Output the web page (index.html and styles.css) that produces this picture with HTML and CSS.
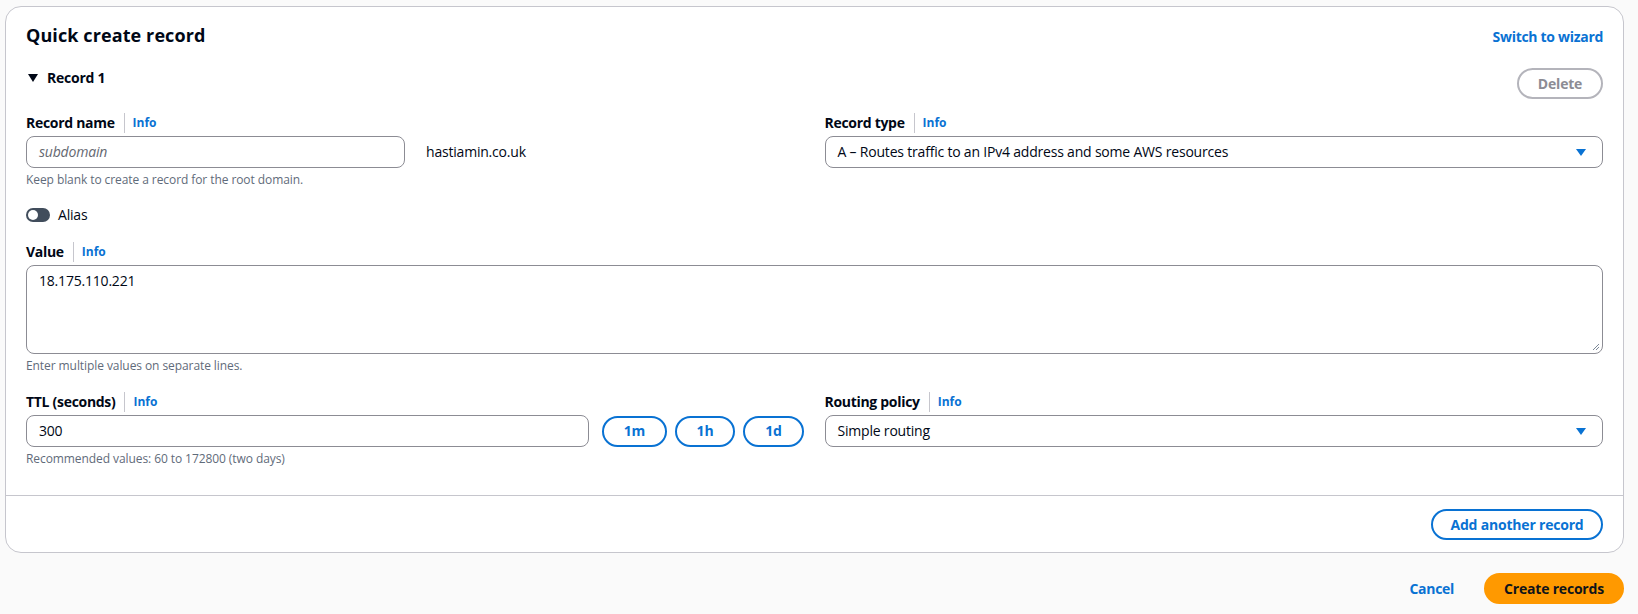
FILE: index.html
```html
<!DOCTYPE html>
<html lang="en">
<head>
<meta charset="utf-8">
<title>Quick create record</title>
<link rel="stylesheet" href="styles.css">
</head>
<body>
<div class="page">
  <section class="card">
    <div class="card-body">
      <header class="card-header">
        <h2 class="title">Quick create record</h2>
        <a class="link-strong" href="#">Switch to wizard</a>
      </header>

      <div class="record-head">
        <div class="expander">
          <svg class="tri" width="10" height="8" viewBox="0 0 10 8"><path d="M0 0 H10 L5 8 Z" fill="#000716"/></svg>
          <span>Record 1</span>
        </div>
        <button class="btn btn-disabled" type="button">Delete</button>
      </div>

      <div class="grid">
        <div class="field">
          <div class="label"><span>Record name</span><span class="sep"></span><a class="info" href="#">Info</a></div>
          <div class="name-row">
            <div class="input name-input"><span class="placeholder">subdomain</span></div>
            <span class="domain">hastiamin.co.uk</span>
          </div>
          <div class="hint">Keep blank to create a record for the root domain.</div>
        </div>
        <div class="field">
          <div class="label"><span>Record type</span><span class="sep"></span><a class="info" href="#">Info</a></div>
          <div class="input select">
            <span>A – Routes traffic to an IPv4 address and some AWS resources</span>
            <svg class="caret" width="10" height="7" viewBox="0 0 10 7"><path d="M0 0 H10 L5 7 Z" fill="#0972d3"/></svg>
          </div>
        </div>
      </div>

      <div class="toggle-row">
        <span class="toggle"><span class="knob"></span></span>
        <span>Alias</span>
      </div>

      <div class="field value-field">
        <div class="label"><span>Value</span><span class="sep"></span><a class="info" href="#">Info</a></div>
        <div class="textarea">
          <span>18.175.110.221</span>
          <svg class="grip" width="8" height="8" viewBox="0 0 8 8"><path d="M7 1 L1 7 M7 4 L4 7" stroke="#7d8998" stroke-width="1"/></svg>
        </div>
        <div class="hint">Enter multiple values on separate lines.</div>
      </div>

      <div class="grid ttl-grid">
        <div class="field">
          <div class="label"><span>TTL (seconds)</span><span class="sep"></span><a class="info" href="#">Info</a></div>
          <div class="ttl-row">
            <div class="input ttl-input"><span>300</span></div>
            <button class="btn btn-normal ttl-btn" type="button">1m</button>
            <button class="btn btn-normal ttl-btn" type="button">1h</button>
            <button class="btn btn-normal ttl-btn" type="button">1d</button>
          </div>
          <div class="hint">Recommended values: 60 to 172800 (two days)</div>
        </div>
        <div class="field">
          <div class="label"><span>Routing policy</span><span class="sep"></span><a class="info" href="#">Info</a></div>
          <div class="input select">
            <span>Simple routing</span>
            <svg class="caret" width="10" height="7" viewBox="0 0 10 7"><path d="M0 0 H10 L5 7 Z" fill="#0972d3"/></svg>
          </div>
        </div>
      </div>
    </div>
    <footer class="card-footer">
      <button class="btn btn-normal" type="button">Add another record</button>
    </footer>
  </section>

  <div class="actions">
    <a class="link-strong cancel" href="#">Cancel</a>
    <button class="btn btn-primary" type="button">Create records</button>
  </div>
</div>
</body>
</html>
```

FILE: styles.css
```css
* { box-sizing: border-box; }
html, body {
  margin: 0;
  padding: 0;
  background: #fafafa;
}
body {
  font-family: "Open Sans", "Noto Sans", Arial, sans-serif;
  font-size: 14px;
  line-height: 20px;
  color: #000716;
  letter-spacing: -0.2px;
}
.page {
  padding: 6px 14px 0 5px;
}
.card {
  background: #ffffff;
  border: 1px solid #c6c6cd;
  border-radius: 16px;
}
.card-body {
  padding: 16px 20px 28px 20px;
}
.card-header {
  display: flex;
  justify-content: space-between;
  align-items: baseline;
}
.title {
  margin: 0;
  font-size: 18px;
  line-height: 24px;
  font-weight: 700;
  letter-spacing: 0.1px;
}
.link-strong {
  color: #0972d3;
  font-weight: 700;
  text-decoration: none;
  font-size: 14px;
  letter-spacing: -0.3px;
}
.record-head {
  display: flex;
  justify-content: space-between;
  align-items: flex-start;
  margin-top: 21px;
}
.expander {
  display: flex;
  align-items: center;
  gap: 9px;
  font-weight: 700;
  padding-left: 2px;
  letter-spacing: -0.25px;
}
.btn {
  font-family: inherit;
  font-size: 14px;
  line-height: 20px;
  font-weight: 700;
  letter-spacing: -0.2px;
  border-radius: 20px;
  border: 2px solid #0972d3;
  background: #ffffff;
  color: #0972d3;
  padding: 4px 18px;
  height: 31px;
  cursor: pointer;
  white-space: nowrap;
}
.btn-disabled {
  border-color: #b4b4bb;
  color: #8c8c94;
  width: 86px;
  padding: 0;
}
.btn-primary {
  background: #ff9900;
  border-color: #ff9900;
  color: #0f141a;
  padding: 4px 18px;
  width: 140px;
}
.grid {
  display: grid;
  grid-template-columns: 1fr 1fr;
  column-gap: 20px;
  margin-top: 13px;
}
.field {
  display: flex;
  flex-direction: column;
}
.label {
  display: flex;
  align-items: center;
  font-weight: 700;
  letter-spacing: -0.3px;
  height: 22px;
  margin-bottom: 2px;
}
.sep {
  display: inline-block;
  width: 1px;
  height: 20px;
  background: #c6c6cd;
  margin: 0 8px 0 9px;
}
.info {
  color: #0972d3;
  font-weight: 700;
  font-size: 12px;
  letter-spacing: 0;
  text-decoration: none;
}
.input {
  height: 32px;
  border: 1px solid #8c8c94;
  border-radius: 8px;
  background: #ffffff;
  padding: 0 12px;
  display: flex;
  align-items: center;
}
.name-row {
  display: flex;
  align-items: center;
  gap: 21px;
}
.name-input { width: 379px; }
.placeholder {
  color: #656871;
  font-style: italic;
}
.domain { color: #000716; }
.select {
  justify-content: space-between;
  padding-right: 16px;
}
.caret { display: block; }
.hint {
  font-size: 12px;
  line-height: 16px;
  color: #5f6b7a;
  letter-spacing: -0.08px;
  margin-top: 4px;
}
.toggle-row {
  display: flex;
  align-items: center;
  gap: 8px;
  margin-top: 17px;
  height: 20px;
}
.toggle {
  width: 24px;
  height: 14px;
  border-radius: 7px;
  background: #414d5c;
  position: relative;
  display: inline-block;
}
.knob {
  position: absolute;
  left: 2px;
  top: 2px;
  width: 10px;
  height: 10px;
  border-radius: 50%;
  background: #ffffff;
}
.value-field { margin-top: 16px; }
.textarea {
  height: 89px;
  border: 1px solid #8c8c94;
  border-radius: 8px;
  padding: 5px 12px;
  position: relative;
  background: #ffffff;
}
.grip {
  position: absolute;
  right: 2px;
  bottom: 2px;
}
.ttl-grid { margin-top: 17px; }
.ttl-row {
  display: flex;
  align-items: center;
  gap: 8px;
}
.ttl-input {
  width: 563px;
  margin-right: 5px;
}
.ttl-btn {
  padding: 0;
  width: 65px;
}
.ttl-btn + .ttl-btn { width: 60px; }
.ttl-btn:last-child { width: 61px; }
.card-footer {
  border-top: 1px solid #c6c6cd;
  padding: 13px 20px 12px 20px;
  display: flex;
  justify-content: flex-end;
}
.card-footer .btn { width: 172px; padding: 0; }
.actions {
  display: flex;
  justify-content: flex-end;
  align-items: center;
  gap: 30px;
  margin-top: 20px;
  padding-right: 0;
}
.cancel { font-size: 14px; }
```
